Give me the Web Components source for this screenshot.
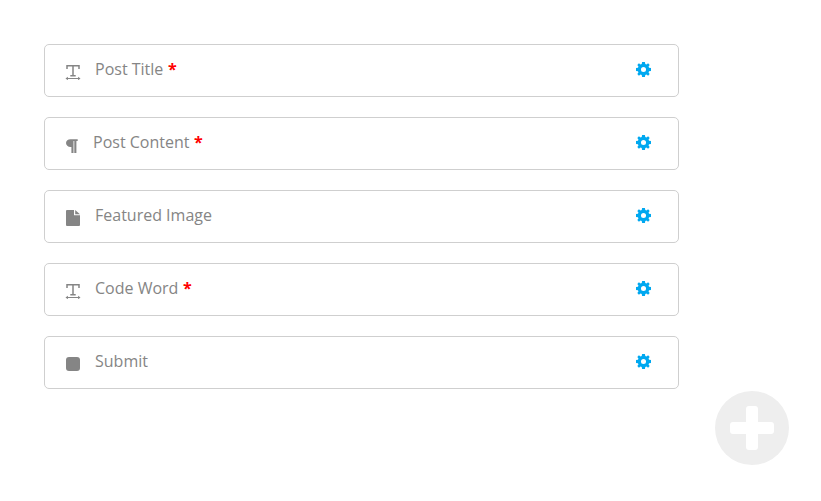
<!DOCTYPE html>
<html>
<head>
<meta charset="utf-8">
<style>
  html, body { margin: 0; background: #fff; }
  body { height: 501px; overflow: hidden; position: relative; }
  form-list { margin: 44px 0 0 44px; }
</style>
</head>
<body>
<form-list>
  <field-row icon="type" required>Post Title</field-row>
  <field-row icon="para" required>Post Content</field-row>
  <field-row icon="file">Featured Image</field-row>
  <field-row icon="type" required>Code Word</field-row>
  <field-row icon="square">Submit</field-row>
</form-list>
<add-button></add-button>

<script>
const ICONS = {
    type: `<svg width="16" height="16" viewBox="0 0 16 16" style="margin:3px 0 0 20px" fill="none" stroke="#858585">
        <path d="M2 5V1.7H14V5M8 1.7V12.3M5.3 11.8H10.7" stroke-width="1.5"/>
        <path d="M1.5 14.5H14.5" stroke-width="1"/>
        <path d="M0.5 14.5l2.4-1.8v3.6zM15.5 14.5l-2.4-1.8v3.6z" fill="#858585" stroke="none"/>
      </svg>`,
    para: `<svg width="12" height="14" viewBox="0 0 12 14" style="margin:4px 0 0 21px" fill="#858585">
        <path d="M4.5 0.3H11.7V2H10.4V14H8.3V2H7.5V14H5.4V8H4.5C2 8 0 6.5 0 4.1S2 0.3 4.5 0.3Z"/>
      </svg>`,
    file: `<svg width="14" height="16" viewBox="0 0 14 16" style="margin:3px 0 0 21px" fill="#858585">
        <path d="M1 0H8V5.2H14V15a1 1 0 0 1-1 1H1a1 1 0 0 1-1-1V1a1 1 0 0 1 1-1Z"/>
        <path d="M9.2 0 14 4.2H9.2Z"/>
      </svg>`,
    square: `<svg width="14" height="14" viewBox="0 0 14 14" style="margin:3px 0 0 21px" fill="#858585">
        <rect width="14" height="14" rx="3"/>
      </svg>`
};

class FormList extends HTMLElement {
    constructor() {
        super();
        this.attachShadow({ mode: 'open' });
    }

    connectedCallback() {
        this.shadowRoot.innerHTML = `
      <style>
        :host {
          display: flex;
          flex-direction: column;
          gap: 20px;
          width: 635px;
        }
      </style>
      <slot></slot>
    `;
    }
}

class FieldRow extends HTMLElement {
    constructor() {
        super();
        this.attachShadow({ mode: 'open' });
    }

    connectedCallback() {
        const icon = this.getAttribute('icon');
        const star = this.hasAttribute('required') ? '<span class="req">*</span>' : '';
        this.shadowRoot.innerHTML = `
      <style>
        :host {
          display: flex;
          align-items: center;
          height: 53px;
          box-sizing: border-box;
          border: 1px solid #cfcfcf;
          border-radius: 5px;
          background: #fff;
          font-family: "Open Sans", sans-serif;
          font-size: 16px;
          color: #858585;
        }
        .icon { display: flex; width: 50px; flex: none; }
        :host([icon="para"]) .icon { width: 48px; }
        .label { flex: 1; margin-bottom: 3px; }
        .req { color: #f00; font-weight: 700; margin-left: 0.5px; }
        .gear { display: flex; margin: 0 27px 2px 0; }
      </style>
      <span class="icon">${ICONS[icon]}</span>
      <span class="label"><slot></slot> ${star}</span>
      <span class="gear">
        <svg width="15" height="15" viewBox="0 0 16 16">
          <path fill="#00a8f0" fill-rule="evenodd" d="M6.5 0H9.5L9.9 2.1 11.1 2.6 12.9 1.4 14.6 3.1 13.4 4.9 13.9 6.1 16 6.5V9.5L13.9 9.9 13.4 11.1 14.6 12.9 12.9 14.6 11.1 13.4 9.9 13.9 9.5 16H6.5L6.1 13.9 4.9 13.4 3.1 14.6 1.4 12.9 2.6 11.1 2.1 9.9 0 9.5V6.5L2.1 6.1 2.6 4.9 1.4 3.1 3.1 1.4 4.9 2.6 6.1 2.1ZM8 5.3a2.7 2.7 0 1 0 0 5.4 2.7 2.7 0 0 0 0-5.4Z"/>
        </svg>
      </span>
    `;
    }
}

class AddButton extends HTMLElement {
    constructor() {
        super();
        this.attachShadow({ mode: 'open' });
    }

    connectedCallback() {
        this.shadowRoot.innerHTML = `
      <style>
        :host {
          position: absolute;
          left: 715px;
          top: 391px;
          width: 74px;
          height: 74px;
          border-radius: 50%;
          background: #eeeeee;
          display: flex;
          align-items: center;
          justify-content: center;
        }
      </style>
      <svg width="44" height="44" viewBox="0 0 44 44" fill="#fff">
        <rect x="16" y="0" width="12" height="44" rx="3"/>
        <rect x="0" y="16" width="44" height="12" rx="3"/>
      </svg>
    `;
    }
}

customElements.define('form-list', FormList);
customElements.define('field-row', FieldRow);
customElements.define('add-button', AddButton);
</script>
</body>
</html>
